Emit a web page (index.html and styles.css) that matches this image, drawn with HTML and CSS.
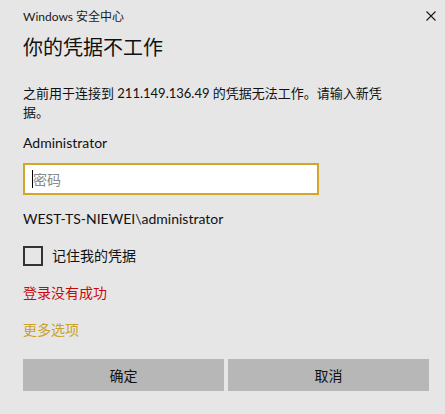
FILE: index.html
```html
<!DOCTYPE html>
<html lang="zh-CN">
<head>
<meta charset="utf-8">
<title>Windows 安全中心</title>
<link rel="stylesheet" href="styles.css">
</head>
<body>
<div class="dialog">
  <div class="titlebar">
    <span class="app">Windows 安全中心</span>
    <svg class="close" width="10" height="10" viewBox="0 0 10 10"><path d="M0.5 0.5L9.5 9.5M9.5 0.5L0.5 9.5" stroke="#1a1a1a" stroke-width="1.1"/></svg>
  </div>
  <h1 class="heading">你的凭据不工作</h1>
  <p class="message">之前用于连接到 211.149.136.49 的凭据无法工作。请输入新凭<br>据。</p>
  <div class="user">Administrator</div>
  <div class="field"><span class="caret"></span><span class="placeholder">密码</span></div>
  <div class="domain">WEST-TS-NIEWEI\administrator</div>
  <label class="remember"><span class="box"></span><span>记住我的凭据</span></label>
  <div class="error">登录没有成功</div>
  <div class="more">更多选项</div>
  <div class="buttons">
    <div class="btn">确定</div>
    <div class="btn">取消</div>
  </div>
</div>
</body>
</html>
```
FILE: styles.css
```css
html, body {
  margin: 0;
  padding: 0;
  background: #e6e6e6;
}
body {
  font-family: "Segoe UI", "Lato", "Noto Sans CJK SC", sans-serif;
  color: #000;
}
.dialog {
  width: 445px;
  height: 414px;
  box-sizing: border-box;
  padding: 0 16px 0 23px;
  display: flex;
  flex-direction: column;
}
.titlebar {
  height: 32px;
  display: flex;
  align-items: center;
  justify-content: space-between;
  font-size: 12px;
  color: #1a1a1a;
}
.titlebar .app { margin-top: -1px; }
.close { margin-right: -7px; margin-top: 0; }
.heading {
  margin: 0;
  font-weight: normal;
  font-size: 20px;
  line-height: 30px;
  height: 30px;
  color: #111;
}
.message {
  margin: 22px 0 0;
  font-size: 13px;
  line-height: 19px;
  color: #111;
}
.user {
  margin-top: 11px;
  font-size: 14px;
  line-height: 20px;
  color: #111;
}
.field {
  margin-top: 10px;
  width: 296px;
  height: 32px;
  box-sizing: border-box;
  border: 2px solid #d2a52b;
  background: #fff;
  display: flex;
  align-items: center;
  padding-left: 7px;
}
.caret {
  width: 1px;
  height: 18px;
  background: #000;
}
.placeholder {
  font-size: 14px;
  color: #8a8a8a;
}
.domain {
  margin-top: 14px;
  font-size: 14px;
  line-height: 20px;
  color: #111;
}
.remember {
  margin-top: 17px;
  display: flex;
  align-items: center;
  gap: 9px;
  font-size: 14px;
  line-height: 20px;
  color: #111;
}
.box {
  width: 20px;
  height: 20px;
  box-sizing: border-box;
  border: 2px solid #333;
}
.error {
  margin-top: 17px;
  font-size: 14px;
  line-height: 20px;
  color: #c80a0a;
}
.more {
  margin-top: 17px;
  font-size: 14px;
  line-height: 20px;
  color: #c9a227;
}
.buttons {
  margin-top: 19px;
  width: 406px;
  display: flex;
  gap: 4px;
}
.btn {
  flex: 1;
  height: 32px;
  background: #b7b7b7;
  display: flex;
  align-items: center;
  justify-content: center;
  font-size: 14px;
  color: #111;
}
```
